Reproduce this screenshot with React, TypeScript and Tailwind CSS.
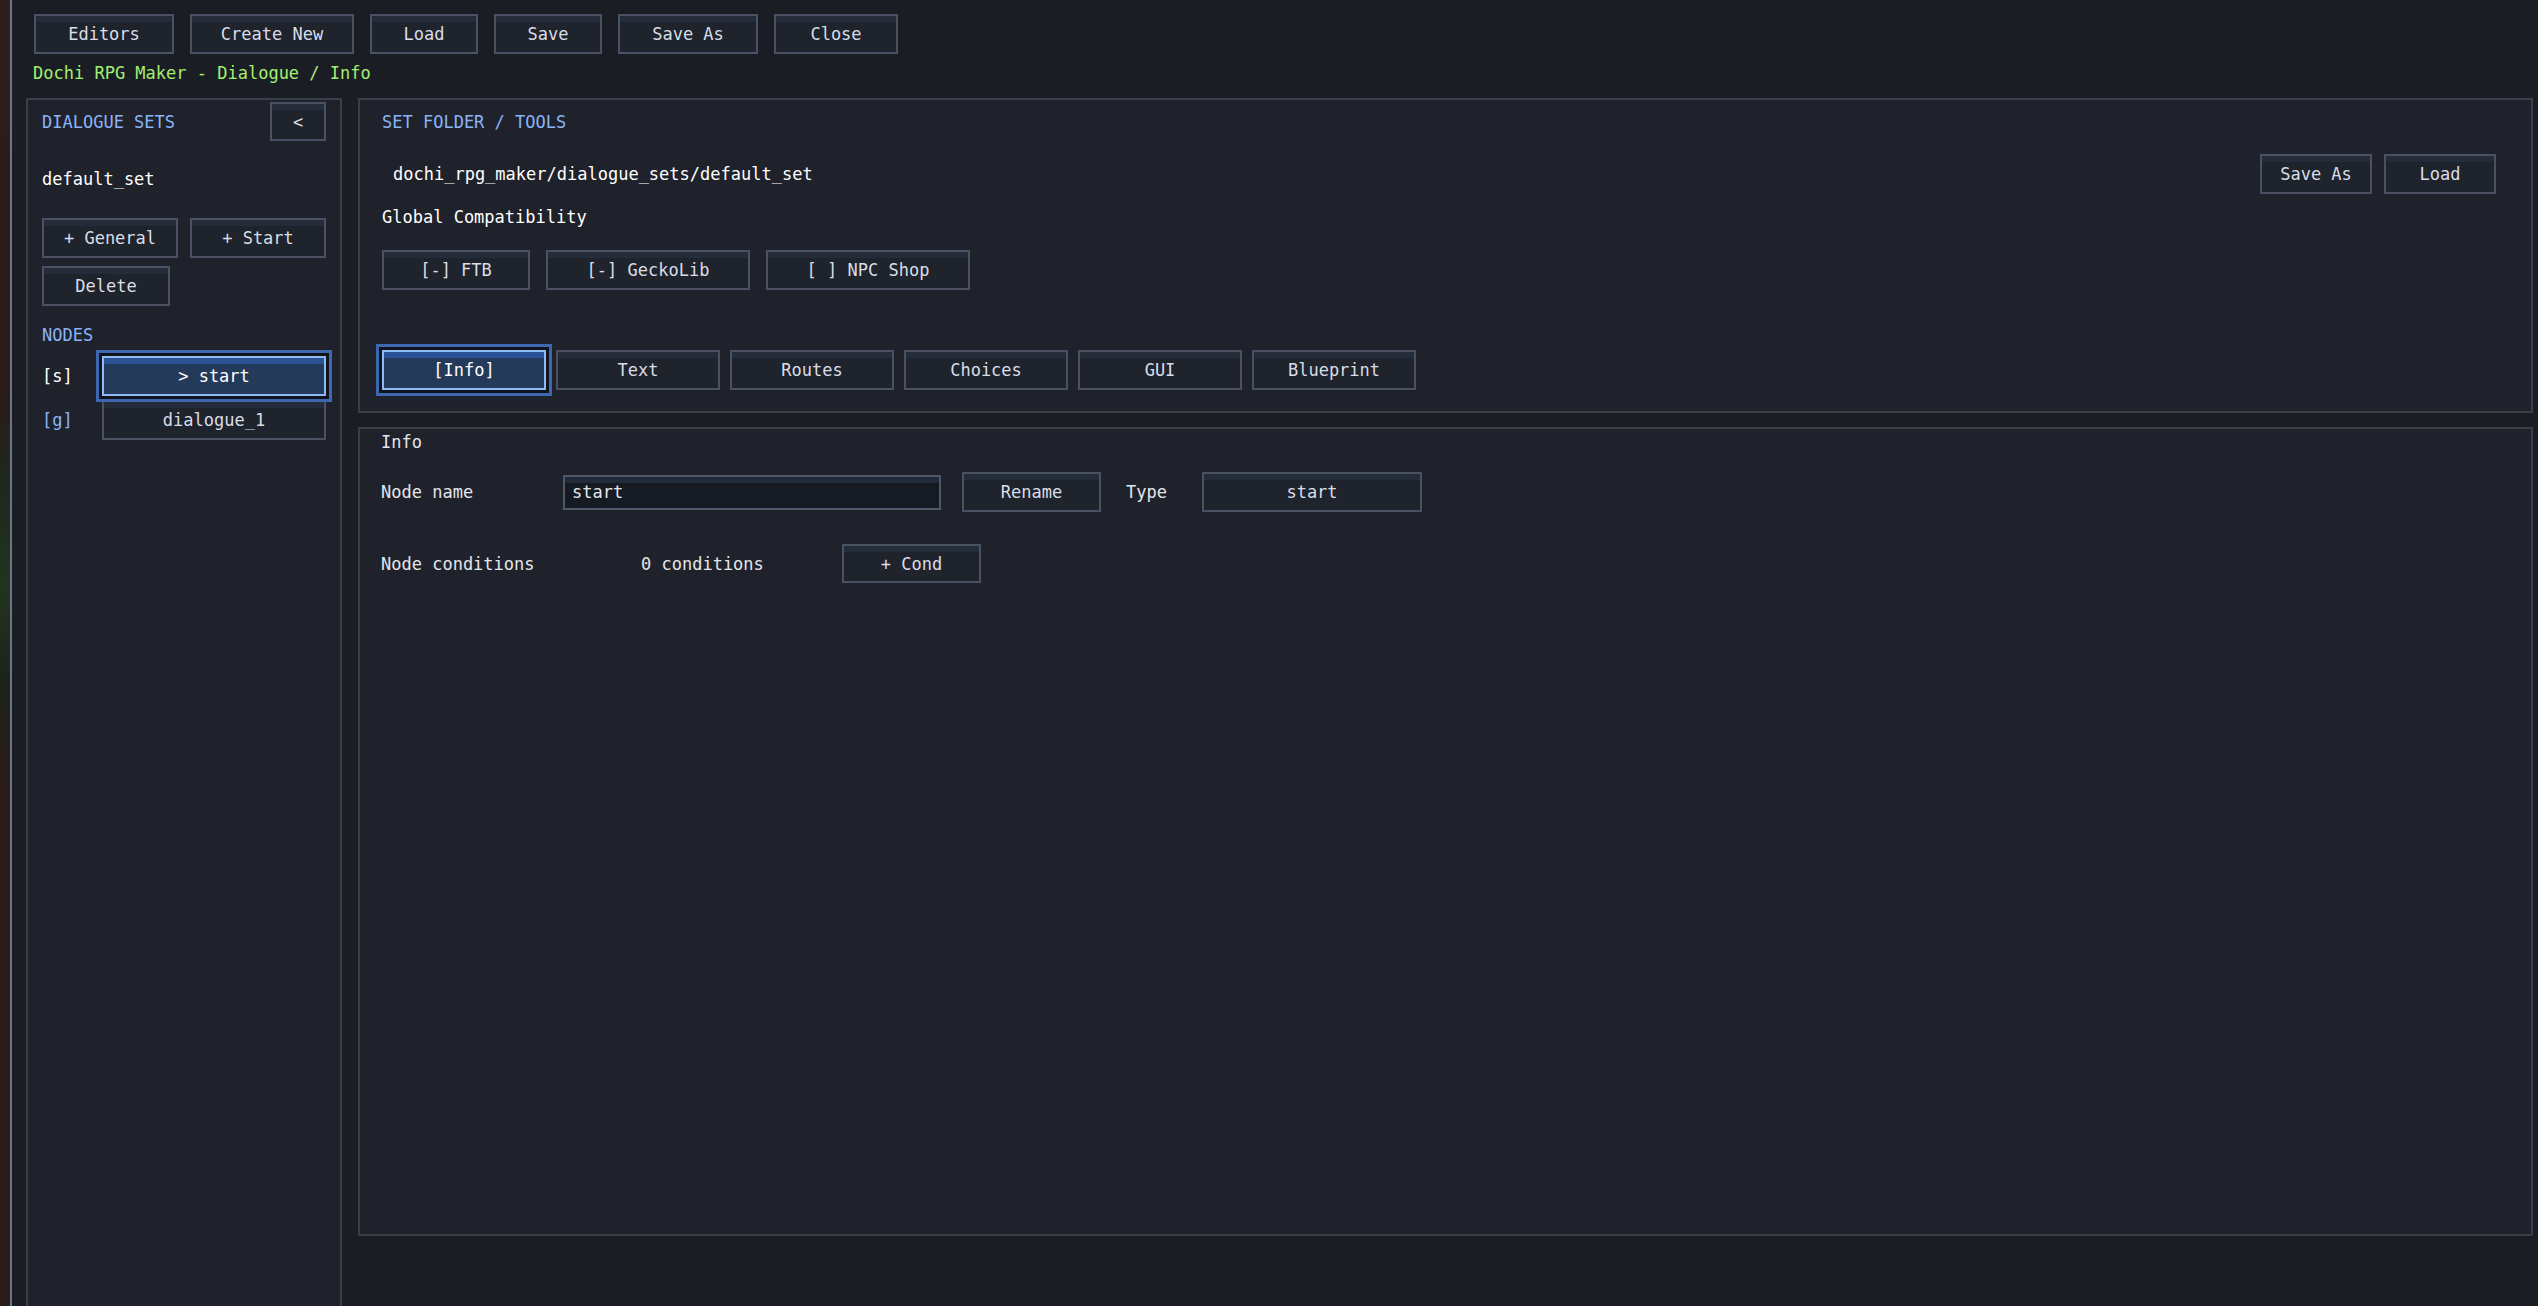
import React from 'react';

type BtnProps = {
  children: React.ReactNode;
  className?: string;
  selected?: boolean;
};

// Minecraft-style button: 2px frame, darker strip at the top
const Btn: React.FC<BtnProps> = ({ children, className = '', selected = false }) => {
  const look = selected
    ? 'relative z-10 border-[#8fbaf6] bg-[#233a5b] text-white shadow-[inset_0_6px_0_#2c5296,0_0_0_3px_#11141a,0_0_0_6px_#3d67b0]'
    : 'border-[#4a5162] bg-[#1f232c] text-[#d9dde7] shadow-[inset_0_6px_0_#242c3a]';
  return (
    <div className={`flex shrink-0 items-center justify-center border-2 ${look} ${className}`}>
      {children}
    </div>
  );
};

const toolbar = [
  { label: 'Editors', w: 'w-[140px]' },
  { label: 'Create New', w: 'w-[164px]' },
  { label: 'Load', w: 'w-[108px]' },
  { label: 'Save', w: 'w-[108px]' },
  { label: 'Save As', w: 'w-[140px]' },
  { label: 'Close', w: 'w-[124px]' },
];

const tabs = ['[Info]', 'Text', 'Routes', 'Choices', 'GUI', 'Blueprint'];

export default function App() {
  return (
    <div className="flex h-[1306px] w-[2538px] overflow-hidden font-['DejaVu_Sans_Mono',monospace] text-[17px] leading-[20px]">
      {/* game world peeking out behind the overlay */}
      <div className="w-[10px] shrink-0 bg-[linear-gradient(180deg,#2c1e1a_0%,#2a1c18_30%,#1e2a1c_38%,#23331f_45%,#1d2419_52%,#2b1d19_60%,#2a1c18_100%)]" />

      <div className="flex min-w-0 flex-1 flex-col border-l-2 border-[#6c768a] bg-[#1b1d24] pl-[14px] pr-[5px]">
        {/* top toolbar */}
        <div className="ml-[8px] mt-[14px] flex gap-[16px]">
          {toolbar.map((b) => (
            <Btn key={b.label} className={`h-[40px] ${b.w}`}>
              {b.label}
            </Btn>
          ))}
        </div>
        <div className="ml-[7px] mt-[9px] text-[#a3f06f]">Dochi RPG Maker - Dialogue / Info</div>

        <div className="mt-[15px] flex min-h-0 flex-1 gap-[16px]">
          {/* left: dialogue sets + nodes */}
          <div className="flex w-[316px] shrink-0 flex-col border-2 border-b-0 border-[#3a3e49] bg-[#1f222a] px-[14px] pt-[2px]">
            <div className="flex items-center justify-between">
              <span className="text-[#8ab4f8]">DIALOGUE SETS</span>
              <Btn className="h-[39px] w-[56px]">&lt;</Btn>
            </div>
            <div className="mt-[28px] text-white">default_set</div>
            <div className="mt-[29px] flex gap-[12px]">
              <Btn className="h-[40px] w-[136px]">+ General</Btn>
              <Btn className="h-[40px] w-[136px]">+ Start</Btn>
            </div>
            <div className="mt-[8px] flex">
              <Btn className="h-[40px] w-[128px]">Delete</Btn>
            </div>
            <div className="mt-[19px] text-[#8ab4f8]">NODES</div>
            <div className="mt-[11px] flex items-center">
              <span className="w-[60px] text-white">[s]</span>
              <Btn selected className="h-[40px] w-[224px]">&gt; start</Btn>
            </div>
            <div className="mt-[4px] flex items-center">
              <span className="w-[60px] text-[#8ab4f8]">[g]</span>
              <Btn className="h-[40px] w-[224px]">dialogue_1</Btn>
            </div>
          </div>

          {/* right column */}
          <div className="flex min-w-0 flex-1 flex-col gap-[14px] pb-[70px]">
            <div className="border-2 border-[#3a3e49] bg-[#1f222a] pb-[21px] pl-[22px] pt-[12px]">
              <div className="text-[#8ab4f8]">SET FOLDER / TOOLS</div>
              <div className="mr-[35px] mt-[22px] flex items-center justify-between">
                <span className="ml-[11px] text-white">dochi_rpg_maker/dialogue_sets/default_set</span>
                <div className="flex gap-[12px]">
                  <Btn className="h-[40px] w-[112px]">Save As</Btn>
                  <Btn className="h-[40px] w-[112px]">Load</Btn>
                </div>
              </div>
              <div className="mt-[13px] text-white">Global Compatibility</div>
              <div className="mt-[23px] flex gap-[16px]">
                <Btn className="h-[40px] w-[148px]">[-] FTB</Btn>
                <Btn className="h-[40px] w-[204px]">[-] GeckoLib</Btn>
                <Btn className="h-[40px] w-[204px]">[ ] NPC Shop</Btn>
              </div>
              <div className="mt-[60px] flex gap-[10px]">
                {tabs.map((t, i) => (
                  <Btn key={t} selected={i === 0} className="h-[40px] w-[164px]">
                    {t}
                  </Btn>
                ))}
              </div>
            </div>

            <div className="flex-1 border-2 border-[#3a3e49] bg-[#1f222a] pl-[21px] pt-[3px] text-[#e4e6eb]">
              <div>Info</div>
              <div className="mt-[20px] flex items-center">
                <span className="w-[182px]">Node name</span>
                <div className="flex h-[35px] w-[378px] items-center border-2 border-[#4f586a] bg-[#151a23] pl-[7px] shadow-[inset_0_6px_0_#212a38]">
                  start
                </div>
                <Btn className="ml-[21px] h-[40px] w-[139px]">Rename</Btn>
                <span className="ml-[25px] w-[76px]">Type</span>
                <Btn className="h-[40px] w-[220px]">start</Btn>
              </div>
              <div className="mt-[32px] flex items-center">
                <span className="w-[260px]">Node conditions</span>
                <span className="w-[201px]">0 conditions</span>
                <Btn className="h-[39px] w-[139px]">+ Cond</Btn>
              </div>
            </div>
          </div>
        </div>
      </div>
    </div>
  );
}
